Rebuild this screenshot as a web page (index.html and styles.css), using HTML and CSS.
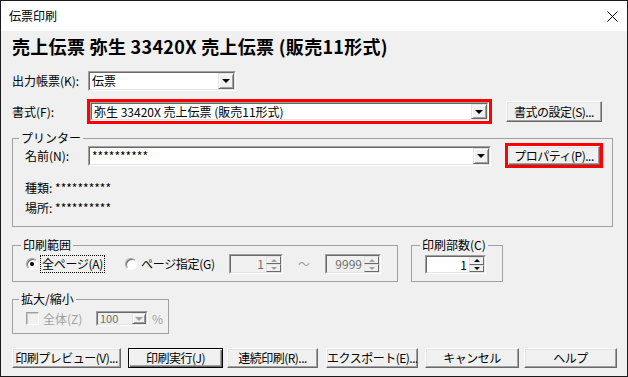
FILE: index.html
```html
<!DOCTYPE html>
<html lang="ja">
<head>
<meta charset="utf-8">
<title>伝票印刷</title>
<link rel="stylesheet" href="styles.css">
</head>
<body>
<div class="win">
  <div class="titlebar">
    <span class="title">伝票印刷</span>
    <svg class="close" viewBox="0 0 11 11" width="11" height="11"><path d="M0.5 0.5 L10.5 10.5 M10.5 0.5 L0.5 10.5" stroke="#000" stroke-width="1" fill="none"/></svg>
  </div>
  <div class="content">
    <h1 class="heading">売上伝票 弥生 33420X 売上伝票 (販売11形式)</h1>

    <div class="row row-output">
      <span class="label lbl-out">出力帳票(K):</span>
      <div class="combo combo-out"><div class="cin"><span class="ctext">伝票</span><span class="drop"><i class="tri"></i></span></div></div>
    </div>

    <div class="row row-format">
      <span class="label lbl-fmt">書式(F):</span>
      <div class="hl hl-format">
        <div class="combo combo-fmt"><div class="cin"><span class="ctext">弥生 33420X 売上伝票 (販売11形式)</span><span class="drop"><i class="tri"></i></span></div></div>
      </div>
      <button class="btn btn-fmt">書式の設定(S)...</button>
    </div>

    <fieldset class="group group-printer">
      <legend class="legend lg-printer">プリンター</legend>
      <div class="row row-name">
        <span class="label lbl-name">名前(N):</span>
        <div class="combo combo-name"><div class="cin"><span class="ctext">**********</span><span class="drop"><i class="tri"></i></span></div></div>
        <div class="hl hl-prop"><button class="btn btn-prop">プロパティ(P)...</button></div>
      </div>
      <div class="info info-kind">種類: **********</div>
      <div class="info info-loc">場所: **********</div>
    </fieldset>

    <div class="groups-row">
      <fieldset class="group group-range">
        <legend class="legend lg-range">印刷範囲</legend>
        <div class="row range-row">
          <div class="opt opt-all"><span class="radio checked"></span><span class="focus">全ページ(A)</span></div>
          <div class="opt opt-page"><span class="radio"></span><span>ページ指定(G)</span></div>
          <div class="spin spin-from disabled"><div class="sin"><span class="sval">1</span><span class="sbtns"><span class="sbtn"><i class="up"></i></span><span class="sbtn"><i class="down"></i></span></span></div></div>
          <span class="tilde">～</span>
          <div class="spin spin-to disabled"><div class="sin"><span class="sval">9999</span><span class="sbtns"><span class="sbtn"><i class="up"></i></span><span class="sbtn"><i class="down"></i></span></span></div></div>
        </div>
      </fieldset>
      <fieldset class="group group-copies">
        <legend class="legend lg-copies">印刷部数(C)</legend>
        <div class="spin spin-copies"><div class="sin"><span class="sval">1</span><span class="sbtns"><span class="sbtn"><i class="up"></i></span><span class="sbtn"><i class="down"></i></span></span></div></div>
      </fieldset>
    </div>

    <fieldset class="group group-zoom">
      <legend class="legend lg-zoom">拡大/縮小</legend>
      <div class="row zoom-row">
        <span class="check"></span>
        <span class="dis-text zoom-label">全体(Z)</span>
        <div class="combo combo-zoom disabled"><div class="cin"><span class="ctext">100</span><span class="drop"><i class="tri"></i></span></div></div>
        <span class="dis-text pct">%</span>
      </div>
    </fieldset>

    <div class="buttons">
      <button class="btn b1">印刷プレビュー(V)...</button>
      <button class="btn btn-default b2">印刷実行(J)</button>
      <button class="btn b3">連続印刷(R)...</button>
      <button class="btn b4">エクスポート(E)...</button>
      <button class="btn b5">キャンセル</button>
      <button class="btn b6">ヘルプ</button>
    </div>
  </div>
</div>
</body>
</html>
```

FILE: styles.css
```css
* { box-sizing: border-box; }
html, body { margin: 0; padding: 0; background: #fff; }
body {
  font-family: "Noto Sans CJK JP", "Noto Sans", sans-serif;
  font-size: 12px;
  color: #000;
}
.win {
  width: 628px;
  height: 377px;
  border: 1px solid #1a1a1a;
  background: #f0f0f0;
  overflow: hidden;
  display: flex;
  flex-direction: column;
}
.titlebar {
  flex: none;
  height: 30px;
  background: #fff;
  display: flex;
  align-items: center;
  justify-content: space-between;
  padding: 0 9px 0 8px;
}
.title { font-size: 12px; line-height: 16px; }
.close { display: block; }
.content { flex: 1; padding-left: 11px; }
.heading {
  margin: 3px 0 0;
  height: 24px;
  line-height: 24px;
  font-size: 18px;
  font-weight: bold;
  letter-spacing: 0.3px;
  white-space: nowrap;
}
.row { display: flex; align-items: center; }
.label { flex: none; white-space: nowrap; line-height: 16px; }

/* combo box */
.combo {
  flex: none;
  display: flex;
  background: #fff;
  border: 1px solid;
  border-color: #a0a0a0 #fff #fff #a0a0a0;
}
.cin {
  flex: 1;
  display: flex;
  border: 1px solid;
  border-color: #696969 #e3e3e3 #e3e3e3 #696969;
  min-width: 0;
}
.ctext {
  flex: 1;
  padding-left: 2px;
  line-height: 16px;
  display: flex;
  align-items: center;
  white-space: nowrap;
  overflow: hidden;
}
.drop {
  flex: none;
  width: 16px;
  background: #f0f0f0;
  border: 1px solid;
  border-color: #e3e3e3 #696969 #696969 #e3e3e3;
  box-shadow: inset 1px 1px 0 #fff, inset -1px -1px 0 #a0a0a0;
  display: flex;
  align-items: center;
  justify-content: center;
}
.tri {
  width: 0; height: 0;
  border-left: 4px solid transparent;
  border-right: 4px solid transparent;
  border-top: 4px solid #000;
}
.combo.disabled, .combo.disabled .cin { background: #f0f0f0; }
.combo.disabled .ctext { color: #6d6d6d; }
.combo.disabled .tri { border-top-color: #a0a0a0; }

/* buttons */
.btn {
  font: inherit;
  font-size: 12px;
  letter-spacing: -0.5px;
  color: #000;
  background: #f0f0f0;
  border: 1px solid;
  border-color: #fff #696969 #696969 #fff;
  box-shadow: inset -1px -1px 0 #a0a0a0, inset 1px 1px 0 #e3e3e3;
  padding: 0;
  height: 20px;
  line-height: 16px;
  white-space: nowrap;
  overflow: hidden;
  flex: none;
}
.btn-default {
  border: 1px solid #000;
  box-shadow: inset 1px 1px 0 #fff, inset -1px -1px 0 #696969, inset -2px -2px 0 #a0a0a0;
}
.hl { flex: none; border: 3px solid #f00; display: flex; }

/* rows */
.row-output { margin-top: 13px; height: 20px; }
.lbl-out { width: 76px; }
.combo-out { width: 148px; height: 20px; }

.row-format { margin-top: 8px; height: 25px; }
.lbl-fmt { width: 75px; }
.hl-format { width: 405px; height: 25px; }
.combo-fmt { width: 399px; height: 19px; }
.btn-fmt { margin-left: 14px; width: 96px; height: 21px; }

/* group boxes */
.group {
  margin: 0;
  padding: 0;
  min-width: 0;
  border: 1px solid #a0a0a0;
}
.legend {
  padding: 0 2px;
  line-height: 14px;
  font-size: 12px;
  white-space: nowrap;
}
.group-printer { margin-top: 7px; width: 601px; padding-bottom: 10px; }
.lg-printer { margin-left: 6px; }
.row-name { margin-top: -2px; margin-left: 12px; height: 25px; }
.lbl-name { width: 63px; }
.combo-name { width: 403px; height: 20px; }
.hl-prop { margin-left: 14px; width: 98px; height: 25px; }
.btn-prop { width: 92px; height: 19px; }
.info { margin-left: 12px; line-height: 16px; height: 16px; }
.info-kind { margin-top: 12px; }
.info-loc { margin-top: 4px; }

.groups-row { display: flex; align-items: flex-start; margin-top: 11px; }
.group-range { width: 386px; padding-bottom: 7px; }
.lg-range { margin-left: 8px; }
.range-row { margin-top: 2px; height: 20px; padding-left: 13px; }
.opt { flex: none; display: flex; align-items: center; line-height: 16px; white-space: nowrap; letter-spacing: -0.3px; }
.opt-all { width: 99px; }
.opt-page { width: 104px; }
.radio {
  flex: none;
  width: 12px; height: 12px;
  border-radius: 50%;
  background: #fff;
  border: 1px solid;
  border-color: #a0a0a0 #fff #fff #a0a0a0;
  box-shadow: inset 1px 1px 0 #696969;
  margin-right: 4px;
  display: flex;
  align-items: center;
  justify-content: center;
}
.radio.checked::after {
  content: "";
  width: 4px; height: 4px;
  border-radius: 50%;
  background: #000;
}
.focus { outline: 1px dotted #000; outline-offset: 0; padding: 0 1px; margin-left: -1px; }

.spin {
  flex: none;
  display: flex;
  border: 1px solid;
  border-color: #a0a0a0 #fff #fff #a0a0a0;
}
.sin {
  flex: 1;
  display: flex;
  background: #fff;
  border: 1px solid;
  border-color: #696969 #e3e3e3 #e3e3e3 #696969;
}
.sval { flex: 1; text-align: right; padding-right: 2px; line-height: 16px; display: flex; align-items: center; justify-content: flex-end; }
.sbtns { flex: none; width: 15px; display: flex; flex-direction: column; }
.sbtn {
  flex: 1;
  background: #f0f0f0;
  border: 1px solid;
  border-color: #e3e3e3 #696969 #696969 #e3e3e3;
  display: flex;
  align-items: center;
  justify-content: center;
}
.up, .down { width: 0; height: 0; border-left: 3px solid transparent; border-right: 3px solid transparent; }
.up { border-bottom: 3px solid #000; }
.down { border-top: 3px solid #000; }
.spin.disabled .sin { background: #f0f0f0; }
.spin.disabled .sval { color: #6d6d6d; }
.spin.disabled .up { border-bottom-color: #a0a0a0; }
.spin.disabled .down { border-top-color: #a0a0a0; }
.spin-from { width: 54px; height: 20px; }
.tilde { flex: none; width: 42px; text-align: center; color: #a0a0a0; line-height: 16px; }
.spin-to { width: 56px; height: 20px; }

.group-copies { margin-left: 13px; width: 92px; padding-bottom: 7px; }
.lg-copies { margin-left: 8px; }
.spin-copies { margin-top: 3px; margin-left: 13px; width: 61px; height: 19px; }

.group-zoom { margin-top: 10px; width: 157px; padding-bottom: 7px; }
.lg-zoom { margin-left: 6px; }
.zoom-row { margin-top: 5px; height: 15px; padding-left: 13px; }
.check {
  flex: none;
  width: 13px; height: 13px;
  background: #f0f0f0;
  border: 1px solid;
  border-color: #a0a0a0 #fff #fff #a0a0a0;
  box-shadow: inset 1px 1px 0 #c8c8c8;
}
.dis-text { color: #a0a0a0; line-height: 14px; white-space: nowrap; flex: none; }
.zoom-label { margin-left: 4px; width: 53px; }
.combo-zoom { width: 52px; height: 15px; }
.combo-zoom .ctext { line-height: 11px; font-size: 11px; overflow: visible; }
.combo-zoom .drop { width: 14px; }
.pct { margin-left: 4px; }

.buttons { display: flex; margin-top: 14px; height: 20px; }
.b1 { width: 109px; }
.b2 { width: 95px; margin-left: 7px; }
.b3 { width: 91px; margin-left: 4px; }
.b4 { width: 92px; margin-left: 8px; }
.b5 { width: 94px; margin-left: 7px; }
.b6 { width: 93px; margin-left: 5px; }
```
